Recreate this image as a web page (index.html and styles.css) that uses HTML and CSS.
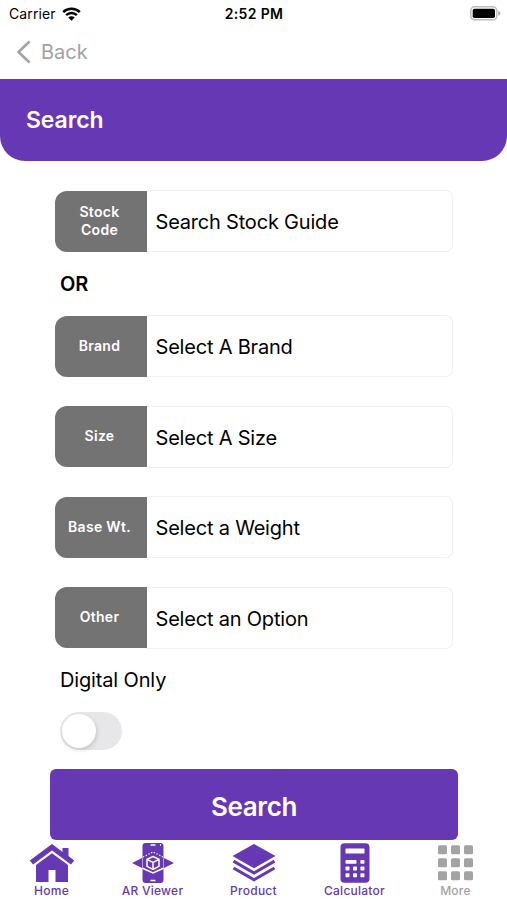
FILE: index.html
```html
<!DOCTYPE html>
<html lang="en">
<head>
<meta charset="utf-8">
<title>Search</title>
<link rel="stylesheet" href="styles.css">
</head>
<body>
<div class="status">
  <div class="carrier"><span>Carrier</span>
    <svg width="19" height="14" viewBox="0 0 19 14"><g fill="none" stroke="#000" stroke-width="2.5"><path d="M1.2 5.1a11.8 11.8 0 0 1 16.6 0"/><path d="M4.1 8.2a7.7 7.7 0 0 1 10.8 0"/></g><path d="M6.3 10.6a4.5 4.5 0 0 1 6.4 0L9.5 13.8z"/></svg>
  </div>
  <div class="time">2:52 PM</div>
  <svg class="battery" width="31" height="15" viewBox="0 0 31 15"><rect x=".8" y=".8" width="26" height="13" rx="3.8" fill="#fff" stroke="#bdbdbd" stroke-width="1.5"/><rect x="2.7" y="2.7" width="22.3" height="9.3" rx="1.8"/><path d="M28.3 5q2.2.5 2.2 2.4t-2.2 2.4z" fill="#aaa"/></svg>
</div>
<nav class="nav"><svg width="16" height="24" viewBox="0 0 16 24"><path d="M13.5 1.5 2.5 12l11 10.5" fill="none" stroke="#a3a3a3" stroke-width="2.6"/></svg><span>Back</span></nav>
<header class="header"><h1>Search</h1></header>
<main class="form">
  <div class="field"><div class="label">Stock<br>Code</div><div class="value">Search Stock Guide</div></div>
  <div class="or">OR</div>
  <div class="field"><div class="label">Brand</div><div class="value">Select A Brand</div></div>
  <div class="field"><div class="label">Size</div><div class="value">Select A Size</div></div>
  <div class="field"><div class="label">Base Wt.</div><div class="value">Select a Weight</div></div>
  <div class="field"><div class="label">Other</div><div class="value">Select an Option</div></div>
  <div class="digital">Digital Only</div>
  <div class="switch"><div class="knob"></div></div>
</main>
<button class="submit">Search</button>
<footer class="tabs">
  <div class="tab"><svg width="46" height="40" viewBox="0 0 46 40"><path d="M23 1 .8 17.5l3.2 4L23 7.5l19 14 3.2-4L39.5 13V5h-6v4z"/><path d="M23 10.2 7 22v17h12.5V27h7v12H39V22z"/></svg><span>Home</span></div>
  <div class="tab"><svg width="46" height="40" viewBox="0 0 46 40"><rect x="12.5" width="21" height="40" rx="3.2"/><path d="M12 15 2 20l10 5zM34 15l10 5-10 5z"/><path d="M12.5 25.2 23 30l10.5-4.8" fill="none" stroke="#fff" stroke-width="1.5"/><path d="m13 14 10-5 10 5" fill="none" stroke="#fff" stroke-width="1.1" stroke-dasharray="1.4 1.6"/><g fill="none" stroke="#fff" stroke-width="1.5"><path d="m23 13.5 6 2.8v7L23 26.5l-6-3.2v-7zM17 16.3l6 3 6-3M23 19.3v7"/><path d="M20.5 2h5M20.5 37.5h5M30 2h1"/></g></svg><span>AR Viewer</span></div>
  <div class="tab"><svg width="46" height="40" viewBox="0 0 46 40"><path d="M23 1 44.5 13 23 25.3 1.5 13z"/><path d="M2.5 18.2 23 30l20.5-11.8M2.5 25 23 36.8 43.500 25" fill="none" stroke="#6638b4" stroke-width="3.1"/></svg><span>Product</span></div>
  <div class="tab"><svg width="46" height="40" viewBox="0 0 46 40"><rect x="8.5" y=".3" width="29" height="39.4" rx="4"/><g fill="#fff"><rect x="13.5" y="5.6" width="19" height="5" rx=".7"/><rect x="13.5" y="17" width="11" height="3.7" rx=".8"/><rect x="28.4" y="17" width="4" height="3.7" rx=".8"/><rect x="13.5" y="23.5" width="4" height="4" rx=".8"/><rect x="21" y="23.5" width="4" height="4" rx=".8"/><rect x="28.4" y="23.5" width="4" height="4" rx=".8"/><rect x="13.5" y="30.3" width="4" height="4" rx=".8"/><rect x="21" y="30.3" width="4" height="4" rx=".8"/><rect x="28.4" y="30.3" width="4" height="4" rx=".8"/></g></svg><span>Calculator</span></div>
  <div class="tab more"><svg width="46" height="40" viewBox="0 0 46 40"><g><rect x="5" y="2.3" width="9" height="9" rx="1.5"/><rect x="18" y="2.3" width="9" height="9" rx="1.5"/><rect x="31" y="2.3" width="9" height="9" rx="1.5"/><rect x="5" y="15.3" width="9" height="9" rx="1.5"/><rect x="18" y="15.3" width="9" height="9" rx="1.5"/><rect x="31" y="15.3" width="9" height="9" rx="1.5"/><rect x="5" y="28.3" width="9" height="9" rx="1.5"/><rect x="18" y="28.3" width="9" height="9" rx="1.5"/><rect x="31" y="28.3" width="9" height="9" rx="1.5"/></g></svg><span>More</span></div>
</footer>
</body>
</html>
```
FILE: styles.css
```css
* { box-sizing: border-box; }
body {
  margin: 0;
  height: 900px;
  overflow: hidden;
  display: flex;
  flex-direction: column;
  background: #fff;
  color: #000;
  font-family: Inter, "Liberation Sans", sans-serif;
}
.status {
  height: 27px;
  display: grid;
  grid-template-columns: 1fr auto 1fr;
  align-items: center;
  padding: 0 6px 0 9px;
  font-size: 14px;
}
.carrier { display: flex; align-items: center; gap: 6px; letter-spacing: .1px; }
.time { font-weight: 600; letter-spacing: .35px; margin-left: -2px; }
.battery { justify-self: end; }
.nav {
  height: 52px;
  display: flex;
  align-items: center;
  gap: 9px;
  padding: 0 0 2px 16px;
  color: #a3a3a3;
  font-size: 20px;
}
.header {
  height: 82px;
  padding-left: 26px;
  display: flex;
  align-items: center;
  background: #6638b4;
  border-radius: 0 0 25px 25px;
  color: #fff;
}
h1 { margin: 0; font-size: 23px; font-weight: 600; letter-spacing: -.1px; }
.form { height: 608px; padding: 29px 54px 0; }
.field {
  display: flex;
  height: 62px;
  margin-bottom: 28.5px;
}
.label {
  width: 92px;
  margin: .5px 0 .5px .5px;
  padding: 0 2px 1px 0;
  display: flex;
  align-items: center;
  justify-content: center;
  text-align: center;
  background: #737373;
  color: #fff;
  border-radius: 12px 0 0 12px;
  font-size: 14px;
  line-height: 18px;
  font-weight: 600;
  letter-spacing: .3px;
}
.value {
  flex: 1;
  display: flex;
  align-items: center;
  padding: 2px 0 0 9px;
  border: 1px solid #f0f0f0;
  border-left: 0;
  border-radius: 0 7px 7px 0;
  font-size: 20px;
  letter-spacing: -.2px;
  white-space: nowrap;
}
.or {
  margin: -28.5px 0 0 6px;
  height: 63px;
  line-height: 65px;
  font-size: 20px;
  font-weight: 600;
}
.digital { margin: -12px 0 0 6px; font-size: 20px; line-height: 30px; letter-spacing: -.15px; }
.switch {
  margin: 17px 0 0 6px;
  width: 62px;
  height: 38px;
  padding: 2px;
  border-radius: 19px;
  background: #e7e7e9;
}
.knob {
  width: 34px;
  height: 34px;
  border-radius: 50%;
  background: #fff;
  box-shadow: 1px 2px 4px rgba(0, 0, 0, .15);
}
.submit {
  width: 408px;
  height: 71px;
  margin: 0 0 0 50px;
  padding: 4px 0 0;
  border: 0;
  border-radius: 6px;
  background: #6638b4;
  color: #fff;
  font: 600 26px Inter, sans-serif;
  letter-spacing: -.4px;
}
.tabs {
  display: grid;
  grid-template-columns: repeat(5, 101px);
  padding: 3px 0 0 1px;
}
.tab {
  display: flex;
  flex-direction: column;
  align-items: center;
  color: #6638b4;
  fill: #6638b4;
  font-size: 12px;
  line-height: 16px;
  font-weight: 500;
  letter-spacing: .25px;
}
.more { color: #a3a3a3; fill: #a3a3a3; }
```
